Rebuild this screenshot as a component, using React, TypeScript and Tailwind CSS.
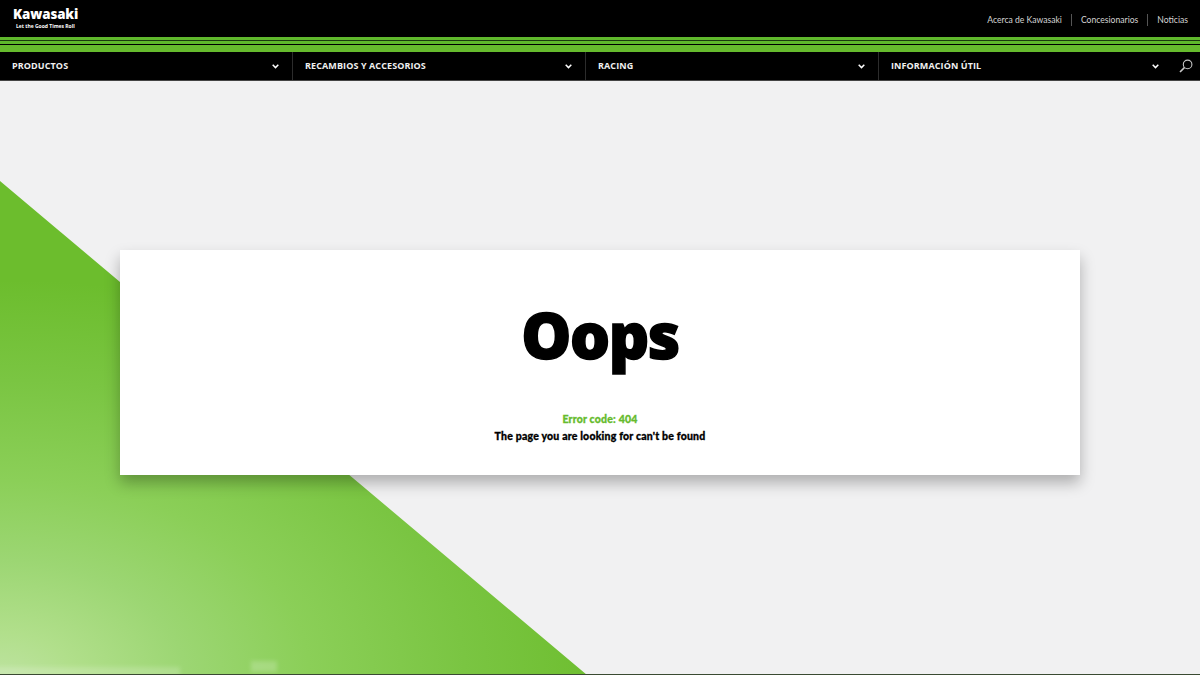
import React from 'react'

const navItems = ['PRODUCTOS', 'RECAMBIOS Y ACCESORIOS', 'RACING', 'INFORMACIÓN ÚTIL']

function Chevron() {
  return (
    <svg width="7" height="5" viewBox="0 0 7 5" fill="none" stroke="#ffffff" strokeWidth="1.5">
      <path d="M0.7 0.8 L3.5 3.6 L6.3 0.8" />
    </svg>
  )
}

function SearchIcon() {
  return (
    <svg width="14" height="14" viewBox="0 0 14 14" fill="none" stroke="#c8c8c8" strokeWidth="1.1">
      <circle cx="8.6" cy="5.4" r="4.3" />
      <path d="M5.4 8.6 L1 13" strokeWidth="1.6" />
    </svg>
  )
}

function GreenShape() {
  return (
    <svg className="absolute inset-0" width="1200" height="594" viewBox="0 81 1200 594">
      <defs>
        <radialGradient
          id="fade"
          gradientUnits="userSpaceOnUse"
          cx="0"
          cy="0"
          r="1"
          gradientTransform="translate(0 680) scale(620 400)"
        >
          <stop offset="0" stopColor="#bee3a1" />
          <stop offset="0.12" stopColor="#b1df8b" />
          <stop offset="0.3" stopColor="#9cd673" />
          <stop offset="0.5" stopColor="#8bcf58" />
          <stop offset="0.75" stopColor="#7ac542" />
          <stop offset="1" stopColor="#6cbd2d" />
        </radialGradient>
        <filter id="soft" x="-20%" y="-50%" width="140%" height="200%">
          <feGaussianBlur stdDeviation="2" />
        </filter>
        <clipPath id="wedge">
          <path d="M0 181 L587 675 L0 675 Z" />
        </clipPath>
      </defs>
      <path d="M0 181 L587 675 L0 675 Z" fill="url(#fade)" />
      <g clipPath="url(#wedge)">
        <rect x="251" y="661" width="26" height="11" fill="#ffffff" opacity="0.2" filter="url(#soft)" />
        <rect x="-10" y="667" width="190" height="10" fill="#ffffff" opacity="0.18" filter="url(#soft)" />
      </g>
      <rect x="0" y="674" width="1200" height="1" fill="#3a4a32" />
    </svg>
  )
}

export default function App() {
  return (
    <div className="h-[675px] w-[1200px] overflow-hidden bg-[#f1f1f2] font-['Open_Sans',sans-serif]">
      {/* Top bar */}
      <header className="flex h-[37px] items-start justify-between bg-black pr-3 pl-[13px]">
        <div className="flex flex-col items-start pt-[8px]">
          <span className="text-[13.3px] leading-[13px] font-extrabold tracking-[-0.1px] text-white">Kawasaki</span>
          <span className="mt-[2px] pl-[3px] text-[5px] leading-[6px] font-bold text-white">Let the Good Times Roll</span>
        </div>
        <div className="mt-[14px] flex items-center font-['Lato',sans-serif] text-[8.6px] leading-3 text-[#d4d4d4]">
          <span className="pr-[9px]">Acerca de Kawasaki</span>
          <span className="border-l border-[#555] pl-[9px]">Concesionarios</span>
          <span className="ml-[9px] border-l border-[#555] pl-[9px]">Noticias</span>
        </div>
      </header>

      {/* Green stripes */}
      <div className="bg-black">
        <div className="h-[3px] bg-[#5fb82c]" />
        <div className="h-px bg-[#1c3a10]" />
        <div className="h-[3px] bg-[#5fb82c]" />
        <div className="h-[1px] bg-black" />
        <div className="h-[7px] bg-[#66bb2d]" />
      </div>

      {/* Nav */}
      <nav className="flex h-[29px] border-b border-[#444] bg-black">
        {navItems.map((item, i) => (
          <div
            key={item}
            className={
              i === 3
                ? 'flex w-[293px] items-center justify-between pr-[13px] pl-3'
                : 'flex w-[293px] items-center justify-between border-r border-[#2c2c2c] pr-[13px] pl-3'
            }
          >
            <span className="text-[9px] font-bold tracking-[0.1px] text-[#f0f0f0]">{item}</span>
            <Chevron />
          </div>
        ))}
        <div className="flex flex-1 items-center justify-center">
          <SearchIcon />
        </div>
      </nav>

      {/* Error panel */}
      <main className="relative h-[594px] overflow-hidden">
        <GreenShape />
        <div className="relative mx-auto mt-[169px] flex h-[225px] w-[960px] flex-col items-center bg-white shadow-[0_8px_14px_rgba(0,0,0,0.28)]">
          <h1 className="mt-[37px] text-[63px] leading-[96px] font-extrabold tracking-[-1.5px] text-black [-webkit-text-stroke:1.5px_black]">
            Oops
          </h1>
          <p className="mt-[28px] font-['Lato',sans-serif] text-[10.5px] leading-4 font-black tracking-[0.2px] text-[#66bb2d] [-webkit-text-stroke:0.3px_#66bb2d]">
            Error code: 404
          </p>
          <p className="mt-[1px] font-['Lato',sans-serif] text-[10.5px] leading-4 font-black tracking-[0.2px] text-black [-webkit-text-stroke:0.3px_black]">
            The page you are looking for can't be found
          </p>
        </div>
      </main>
    </div>
  )
}
